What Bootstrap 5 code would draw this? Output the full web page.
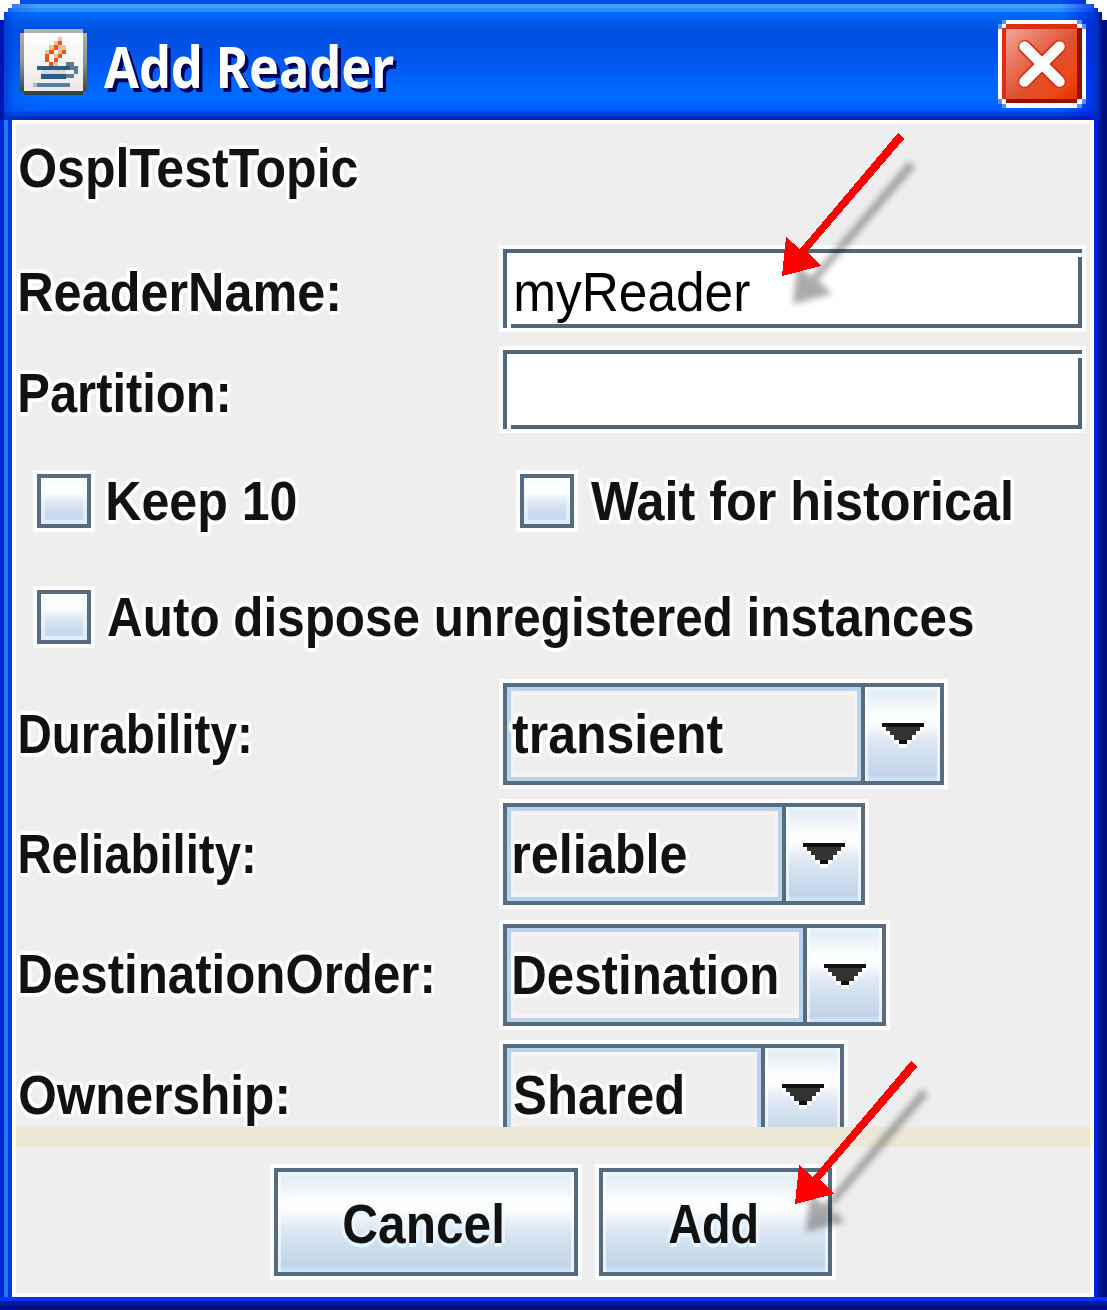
<!DOCTYPE html>
<html lang="en">
<head>
<meta charset="utf-8">
<title>Add Reader</title>
<link href="https://cdn.jsdelivr.net/npm/bootstrap@5.3.0/dist/css/bootstrap.min.css" rel="stylesheet">
<style>
body{margin:0;background:#fff;font-family:"Liberation Sans",Arial,sans-serif;overflow:hidden}
.dlg{width:1107px;height:1310px;background:#0010a0;clip-path:polygon(20px 0,1086px 0,1086px 4px,1094px 4px,1094px 8px,1098px 8px,1098px 12px,1102px 12px,1102px 20px,1107px 20px,1107px 1310px,0 1310px,0 20px,4px 20px,4px 12px,8px 12px,8px 8px,12px 8px,12px 4px,20px 4px)}
.titlebar{height:120px;padding:0 21px 0 20px;background:linear-gradient(90deg,#0014b4 0,#0014b4 4px,rgba(0,50,210,.7) 4px,rgba(0,80,225,.35) 14px,transparent 40px,transparent 1060px,rgba(0,20,220,.6) 1092px,#0030b0 1098px,#0018a0 1101px,#001080 1102px),linear-gradient(#0050e6 0,#0050e6 4px,#4aa0ff 4px,#4aa0ff 8px,#2a90ff 8px,#2a90ff 12px,#006cff 12px,#0068fa 16px,#005cee 20px,#0050e0 30px,#0052e4 45px,#005af4 68px,#0068ff 86px,#006aff 98px,#005cff 111px,#0044dc 112px,#0040d8 116px,#0024c0 116px)}
.frame{height:1190px;padding:0 13px 13px 12px;background:linear-gradient(#0034ff 0 4px,#0018a0 4px 8px,#001084 8px) 0 100%/100% 13px no-repeat,linear-gradient(90deg,#0424d8 0 4px,#1c78f6 4px 8px,#003cdc 8px 12px,#0020e8 12px 1098px,#0018a0 1098px 1102px,#001084 1102px)}
.inner{height:1177px;background:#eee;border:4px solid #fffff0}
.form-area{height:1003px;overflow:hidden;padding-left:2px}
.band{height:20px;margin:0 -4px;background:#ebe8d8;border:solid #ffffd8;border-width:0 4px}
.lb{font-weight:700;font-size:55px;line-height:60px;height:60px;white-space:nowrap;color:#121212;text-shadow:4px 0 0 #fff,-4px 0 0 #fff,0 4px 0 #fff,0 -4px 0 #fff,3px 3px 0 #f8f8f8,-3px -3px 0 #f8f8f8,3px -3px 0 #f8f8f8,-3px 3px 0 #f8f8f8}
.lb span,.ttl span{display:inline-block;transform-origin:0 50%}
.lc{width:485px;flex:none}
.ra{height:125px;padding-top:14px}.rb{height:101px}.rc{height:120px}.rd{height:116px;padding-left:19px}.re{height:97px;padding-left:19px}.rf{height:120px}.rg{height:121px}.rh{height:120px}.ri{height:122px}
.t12{margin-top:12px}.t13{margin-top:13px}.t20{margin-top:20px}.t21{margin-top:21px}
.field{width:579px;height:79px;border:4px solid #50667a;background:#fff;border-radius:0;box-shadow:0 0 0 4px #fdfdfd;position:relative;padding:0 0 0 7px;margin:0}
.field::before,.field::after{content:"";position:absolute;width:4px;height:4px;background:#fff}
.field::before{right:-4px;top:0}.field::after{left:0;bottom:-4px}
.field .lb{font-weight:400;color:#000;margin-top:9px;text-shadow:none}
.box{width:54px;height:54px;margin-top:4px;border:4px solid #566b80;flex:none;box-shadow:0 0 0 4px #fcfcfc,inset 0 0 0 4px rgba(244,253,255,.55);background:linear-gradient(#f6fcff 0,#fff 30%,#dfe8f4 52%,#c8d8ec 80%,#c4dffa 100%)}
.ck{margin-left:15px;margin-top:1px}.lk{width:483px}
.combo{height:102px;border:4px solid #586c80;box-shadow:0 0 0 4px #fcfcfc}
.combo .val{flex:1;min-width:0;border:4px solid #b8d4f0;box-shadow:inset 0 0 0 4px #f7f2ee}
.combo .val .lb{margin:13px 0 0 1px}
.combo .drop{width:79px;flex:none;border-left:4px solid #586c80;display:flex;justify-content:center;align-items:flex-start;padding-top:36px}
.drop svg{overflow:visible}
.c1{width:441px}.c2{width:362px}.c3{width:383px}.c4{width:341px}
.glass{background:linear-gradient(#e8f8ff 0,#e4edf6 6%,#f4f8fb 22%,#fff 30%,#fcfdff 38%,#dfe8f3 56%,#d2e0ee 70%,#c1d4e8 94%,#cbe3fa 97%);box-shadow:inset 3px 0 0 rgba(255,255,255,.6),inset -3px 0 0 rgba(255,255,255,.6)}
.pushb{height:108px;border:4px solid #566b80;border-radius:0;padding:3px 0 0;outline:4px solid #fcfcfc;text-align:left}
.pushb .lb{margin-left:64px;text-shadow:0 4px 0 #e4f6ff,4px 0 0 rgba(240,250,255,.7),-4px 0 0 rgba(240,250,255,.7)}
.b1{width:304px}.b2{width:233px}
.actions{padding:21px 0 0 258px;gap:21px}
.ttl{font:700 58px/70px "Noto Sans","Open Sans",sans-serif;color:#fff;text-shadow:4px 4px 0 #000058;height:70px;margin:31px 0 0 15px;white-space:nowrap}
.jico{margin-top:29px}.xico{margin-top:20px}
.over{position:absolute;left:0;top:0;pointer-events:none}
</style>
<script src="https://cdn.jsdelivr.net/npm/bootstrap@5.3.0/dist/js/bootstrap.bundle.min.js"></script>
</head>
<body>
<div class="dlg">
  <div class="titlebar d-flex align-items-start">
    <svg class="jico" width="67" height="66" viewBox="0 0 67 66" shape-rendering="crispEdges">
      <defs><linearGradient id="jb" x1="0" y1="0" x2="0" y2="1"><stop offset="0" stop-color="#b0b4b4"/><stop offset=".5" stop-color="#8c9494"/><stop offset="1" stop-color="#284048"/></linearGradient>
      <linearGradient id="jf" x1="0" y1="0" x2="0" y2="1"><stop offset="0" stop-color="#fff"/><stop offset="1" stop-color="#ece8e8"/></linearGradient></defs>
      <path fill="url(#jb)" d="M4 0h59v4h4v58h-4v4H4v-4H0V4h4z"/><path fill="url(#jf)" d="M4 4h59v58H4z"/>
      <path fill="#ecc0a0" d="M38 8h4v4h-4zM34 12h4v4h-4zM29 16h5v5h-5zM38 16h8v5h-8zM25 21h4v4h-4zM38 21h4v4h-4zM34 25h4v4h-4zM33 33h5v4h-5z"/>
      <path fill="#ec5810" d="M38 12h4v4h-4v5h-4v4h-5v4h-4v-4h4v-4h5v-5h4zM42 21h4v4h-4v4h-4v4h-4v-4h4v-4h4zM25 29h4v4h4v4h-4v-4h-4z"/>
      <path fill="#2c5c80" d="M17 37h33v4H17zM21 45h25v5H21z"/><path fill="#5580a0" d="M17 54h33v4H17z"/>
      <path fill="#d4dce2" d="M21 41h25v4H21z"/>
      <path fill="#5c7c94" d="M46 33h8v4h-8zM50 37h4v4h-4zM54 37h4v8h-4zM46 45h8v4h-8z"/><path fill="#b4bcc4" d="M13 54h4v4h-4z"/>
    </svg>
    <div class="ttl"><span data-w="290">Add Reader</span></div>
    <svg class="xico ms-auto" width="88" height="88" viewBox="0 0 88 88">
      <defs><linearGradient id="xr" x1="0" y1="0" x2="1" y2="1"><stop offset="0" stop-color="#f0a898"/><stop offset=".25" stop-color="#e87c64"/><stop offset=".55" stop-color="#e05030"/><stop offset=".8" stop-color="#ec4814"/><stop offset="1" stop-color="#e03000"/></linearGradient></defs>
      <path fill="#5a90ff" shape-rendering="crispEdges" d="M4 0h80v4h4v80h-4v4H4v-4H0V4h4z"/>
      <path fill="#fff" shape-rendering="crispEdges" d="M8 0h71v4h5v5h4v70h-4v5h-5v4H8v-4H4v-5H0V9h4V4h4z"/>
      <path fill="#d83010" shape-rendering="crispEdges" d="M8 4h71v4h5v71h-5v4H8v-4H4V8h4z"/>
      <path fill="url(#xr)" d="M8 9h71v70H8z"/>
      <path fill="#961200" shape-rendering="crispEdges" d="M79 8h5v71h-5zM8 79h71v4H8z"/>
      <path stroke="#d82c10" stroke-width="14" stroke-linecap="round" d="m27 27 34 34m0-34L27 61"/>
      <path stroke="#fff" stroke-width="10.5" stroke-linecap="round" d="m26.500 26.500 35 35m0-35-35 35"/>
    </svg>
  </div>
  <div class="frame"><div class="inner">
    <div class="form-area">
      <div class="ra"><div class="lb"><span data-w="337">OsplTestTopic</span></div></div>
      <div class="rb d-flex"><div class="lc lb t13"><span data-w="318">ReaderName:</span></div><div class="field"><div class="lb"><span data-w="234">myReader</span></div></div></div>
      <div class="rc d-flex"><div class="lc lb t13"><span data-w="208">Partition:</span></div><div class="field"></div></div>
      <div class="rd d-flex"><div class="d-flex lk"><div class="box"></div><div class="lb ck"><span data-w="188">Keep 10</span></div></div><div class="d-flex"><div class="box"></div><div class="lb ck"><span data-w="420">Wait for historical</span></div></div></div>
      <div class="re d-flex"><div class="box"></div><div class="lb ck"><span data-w="865">Auto dispose unregistered instances</span></div></div>
      <div class="rf d-flex"><div class="lc lb t21"><span data-w="229">Durability:</span></div><div class="combo d-flex c1"><div class="val"><div class="lb" style="margin-left:-1px"><span data-w="211">transient</span></div></div><div class="drop glass"><svg width="42" height="22"><use href="#dn"/></svg></div></div></div>
      <div class="rg d-flex"><div class="lc lb t21"><span data-w="233">Reliability:</span></div><div class="combo d-flex c2"><div class="val"><div class="lb"><span data-w="172">reliable</span></div></div><div class="drop glass"><svg width="42" height="22"><use href="#dn"/></svg></div></div></div>
      <div class="rh d-flex"><div class="lc lb t20"><span data-w="412">DestinationOrder:</span></div><div class="combo d-flex c3"><div class="val"><div class="lb"><span data-w="263">Destination</span></div></div><div class="drop glass"><svg width="42" height="22"><use href="#dn"/></svg></div></div></div>
      <div class="ri d-flex"><div class="lc lb t21"><span data-w="267">Ownership:</span></div><div class="combo d-flex c4"><div class="val"><div class="lb"><span data-w="168">Shared</span></div></div><div class="drop glass"><svg width="42" height="22"><use href="#dn"/></svg></div></div></div>
    </div>
    <div class="band"></div>
    <div class="actions d-flex">
      <button class="btn pushb glass b1"><div class="lb"><span data-w="158">Cancel</span></div></button>
      <button class="btn pushb glass b2"><div class="lb"><span data-w="87">Add</span></div></button>
    </div>
  </div></div>
</div>
<svg class="over" width="1107" height="1310" viewBox="0 0 1107 1310">
  <defs>
    <g id="dn" shape-rendering="crispEdges">
      <path fill="#fff" d="M-4 0h50v4h-4v4h-4v4h-4v5h-5v4h-4v4h-8v-4h-5v-4H9v-5H4V8H0V4h-4z"/>
      <path fill="#333" d="M0 0h42v4h-4v4h-4v4h-4v5h-5v4h-8v-4h-5v-5H8V8H4V4H0z"/>
      <path fill="#111" d="M0 0h42v4H0zM17 17h8v4h-8z"/>
    </g>
    <path id="arr" d="M898 133 904 139 807 252 821 266 782 276 786 237 800 249z"/>
    <filter id="soft" x="-20%" y="-20%" width="140%" height="140%"><feGaussianBlur stdDeviation="3"/></filter>
  </defs>
  <g opacity=".33" filter="url(#soft)"><use href="#arr" x="11" y="28"/></g>
  <use href="#arr" fill="#f00" shape-rendering="crispEdges"/>
  <g opacity=".33" filter="url(#soft)"><use href="#arr" x="24" y="956"/></g>
  <use href="#arr" x="13" y="928" fill="#f00" shape-rendering="crispEdges"/>
</svg>
<script>
// condense each caption so that its ink spans the width in data-w
const cx=document.createElement('canvas').getContext('2d');
document.querySelectorAll('[data-w]').forEach(e=>{
  const s=getComputedStyle(e);cx.font=s.fontWeight+' '+s.fontSize+' '+s.fontFamily;
  const m=cx.measureText(e.textContent),ink=m.actualBoundingBoxRight+m.actualBoundingBoxLeft,k=e.dataset.w/ink;
  e.style.transform='translateX('+(m.actualBoundingBoxLeft*k+2).toFixed(2)+'px) scaleX('+k.toFixed(4)+')';
});
</script>
</body>
</html>
